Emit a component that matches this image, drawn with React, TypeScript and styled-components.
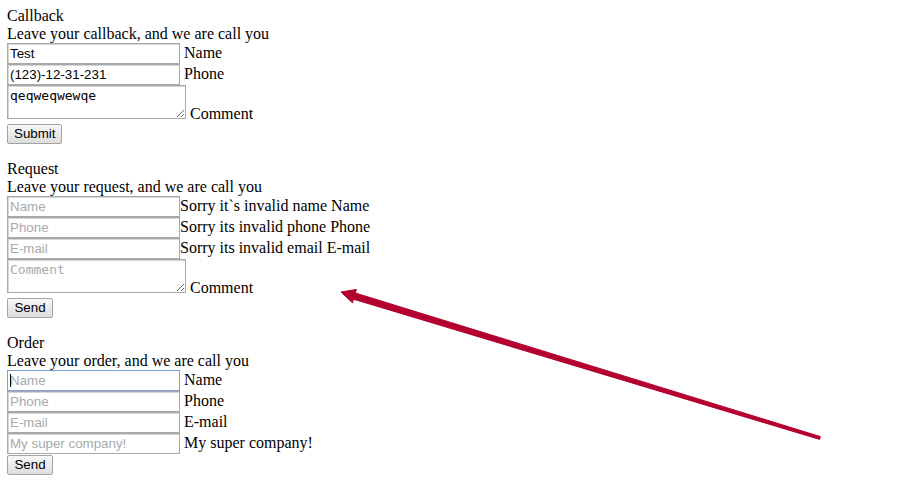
import React from "react";
import styled, { createGlobalStyle, css } from "styled-components";

const Global = createGlobalStyle`
  html, body { margin: 0; padding: 0; background: #ffffff; }
  body { font-family: "Liberation Serif", "Times New Roman", serif; font-size: 16px; color: #000; }
`;

const Page = styled.div`
  position: relative;
  width: 918px;
  height: 486px;
  box-sizing: border-box;
  padding: 8px 7px 0;
  display: flex;
  flex-direction: column;
  gap: 17px;
  overflow: hidden;
`;

const Section = styled.form`
  display: flex;
  flex-direction: column;
  align-items: flex-start;
  margin: 0;
`;

const Line = styled.div`
  box-sizing: border-box;
  line-height: 15.5px;
  height: 17.5px;
  white-space: nowrap;
`;

const Row = styled.div<{ $gap: number }>`
  display: flex;
  align-items: center;
  gap: ${(p) => p.$gap}px;
  height: 21px;
`;

const TextRow = styled.div`
  display: flex;
  align-items: flex-end;
  gap: 4px;
  height: 38px;
`;

const Label = styled.span`
  line-height: 18px;
  padding-bottom: 2px;
  white-space: nowrap;
`;

const CommentLabel = styled.span`
  line-height: 18px;
  white-space: nowrap;
`;

const fieldBase = css`
  box-sizing: border-box;
  margin: 0;
  border: 1px solid #a9a9a9;
  box-shadow: inset 1px 1px 0 #d6d6d6;
  background: #fff;
  color: #000;
  outline: none;
  &::placeholder { color: #a9a9a9; opacity: 1; }
`;

const TextInput = styled.input<{ $focused?: boolean }>`
  ${fieldBase};
  width: 173px;
  height: 21px;
  padding: 1px 2px;
  font-family: "Liberation Sans", Arial, sans-serif;
  font-size: 13.333px;
  ${(p) =>
    p.$focused &&
    css`
      border-color: #7e9fd7;
      box-shadow: none;
    `}
`;

const CaretBox = styled.span`
  position: relative;
  display: inline-flex;
  &::after {
    content: "";
    position: absolute;
    left: 3px;
    top: 4px;
    width: 1px;
    height: 13px;
    background: #000;
  }
`;

const TextArea = styled.textarea`
  ${fieldBase};
  width: 179px;
  height: 34px;
  margin-bottom: 4px;
  padding: 2px 2px;
  font-family: "DejaVu Sans Mono", "Liberation Mono", monospace;
  font-size: 13px;
  line-height: 15px;
  resize: both;
`;

const Button = styled.button<{ $w: number }>`
  box-sizing: border-box;
  width: ${(p) => p.$w}px;
  height: 20px;
  margin: 1px 0 0;
  padding: 0 6px;
  border: 1px solid #a3a3a3;
  border-radius: 2px;
  background: linear-gradient(#f8f8f8, #dddddd);
  font-family: "Liberation Sans", Arial, sans-serif;
  font-size: 13.333px;
  color: #000;
  line-height: 18px;
`;

const ArrowSvg = styled.svg`
  position: absolute;
  left: 0;
  top: 0;
  pointer-events: none;
`;

const Arrow = () => (
  <ArrowSvg width="918" height="486" viewBox="0 0 918 486">
    <polygon
      points="341,292 356.4,289.4 355.3,293.0 820.4,436.6 819.6,439.4 353.5,299.2 352.4,302.8"
      fill="#b4002e"
      stroke="#b4002e"
      strokeWidth="1"
      strokeLinejoin="round"
    />
  </ArrowSvg>
);

export default function App() {
  const stop = (e: React.FormEvent) => e.preventDefault();
  return (
    <>
      <Global />
      <Page>
        <Section onSubmit={stop}>
          <Line>Callback</Line>
          <Line>Leave your callback, and we are call you</Line>
          <Row $gap={4}>
            <TextInput defaultValue="Test" />
            <Label>Name</Label>
          </Row>
          <Row $gap={4}>
            <TextInput defaultValue="(123)-12-31-231" />
            <Label>Phone</Label>
          </Row>
          <TextRow>
            <TextArea defaultValue="qeqweqwewqe" />
            <CommentLabel>Comment</CommentLabel>
          </TextRow>
          <Button $w={55} type="submit">Submit</Button>
        </Section>

        <Section onSubmit={stop}>
          <Line>Request</Line>
          <Line>Leave your request, and we are call you</Line>
          <Row $gap={0}>
            <TextInput placeholder="Name" />
            <Label>Sorry it`s invalid name Name</Label>
          </Row>
          <Row $gap={0}>
            <TextInput placeholder="Phone" />
            <Label>Sorry its invalid phone Phone</Label>
          </Row>
          <Row $gap={0}>
            <TextInput placeholder="E-mail" />
            <Label>Sorry its invalid email E-mail</Label>
          </Row>
          <TextRow>
            <TextArea placeholder="Comment" />
            <CommentLabel>Comment</CommentLabel>
          </TextRow>
          <Button $w={46} type="submit">Send</Button>
        </Section>

        <Section onSubmit={stop}>
          <Line>Order</Line>
          <Line>Leave your order, and we are call you</Line>
          <Row $gap={4}>
            <CaretBox>
              <TextInput placeholder="Name" $focused />
            </CaretBox>
            <Label>Name</Label>
          </Row>
          <Row $gap={4}>
            <TextInput placeholder="Phone" />
            <Label>Phone</Label>
          </Row>
          <Row $gap={4}>
            <TextInput placeholder="E-mail" />
            <Label>E-mail</Label>
          </Row>
          <Row $gap={4}>
            <TextInput placeholder="My super company!" />
            <Label>My super company!</Label>
          </Row>
          <Button $w={46} type="submit">Send</Button>
        </Section>
        <Arrow />
      </Page>
    </>
  );
}
